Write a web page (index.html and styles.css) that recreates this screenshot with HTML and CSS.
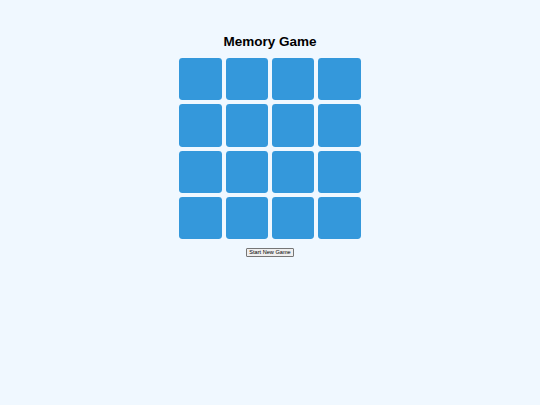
FILE: index.html
```html
<!DOCTYPE html>
<html>
<head>
<meta charset="utf-8">
<link rel="stylesheet" href="styles.css">
</head>
<body>
<div class="app">
  <h1 class="title">Memory Game</h1>
  <div class="board">
    <div class="card"></div><div class="card"></div><div class="card"></div><div class="card"></div>
    <div class="card"></div><div class="card"></div><div class="card"></div><div class="card"></div>
    <div class="card"></div><div class="card"></div><div class="card"></div><div class="card"></div>
    <div class="card"></div><div class="card"></div><div class="card"></div><div class="card"></div>
  </div>
  <button class="restart">Start New Game</button>
</div>
</body>
</html>
```
FILE: styles.css
```css
html, body {
  margin: 0;
  padding: 0;
  background: #f0f8ff;
  height: 100%;
}
body {
  font-family: "Liberation Sans", Arial, sans-serif;
}
.app {
  display: flex;
  flex-direction: column;
  align-items: center;
  padding-top: 34px;
}
.title {
  font-size: 13.5px;
  font-weight: bold;
  line-height: 16px;
  margin: 0 0 8px 0;
  color: #000;
}
.board {
  display: grid;
  grid-template-columns: repeat(4, 42.2px);
  grid-auto-rows: 42.2px;
  gap: 4.2px;
}
.card {
  background: #3498db;
  border-radius: 3.4px;
}
.restart {
  margin-top: 9px;
  font-family: "Liberation Sans", Arial, sans-serif;
  font-size: 5.6px;
  padding: 1px 2px;
  height: 8.4px;
  line-height: 5px;
  background: #efefef;
  border: 0.5px solid #767676;
  border-radius: 1px;
  color: #000;
}
```
